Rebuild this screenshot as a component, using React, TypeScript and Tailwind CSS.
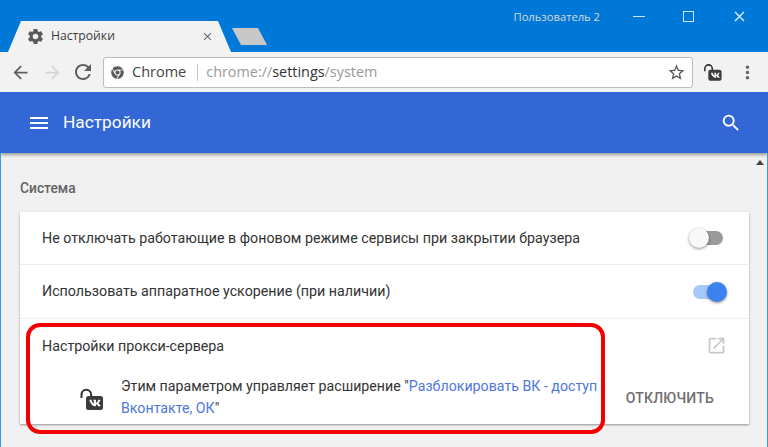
import { FaChrome, FaVk } from "react-icons/fa"
import { MdArrowBack, MdArrowForward, MdClose, MdMenu, MdMoreVert, MdOpenInNew, MdRefresh, MdSearch, MdSettings, MdStarBorder } from "react-icons/md"

function VkLock({ className }: { className: string }) {
    return (
        <div className={`relative h-[23px] w-[24px] shrink-0 ${className}`}>
            <svg viewBox="0 0 24 23" className="h-[23px] w-[24px]">
                <path d="M1.5 10V6.5a4.8 4.8 0 0 1 9.6 0V9" fill="none" stroke="#333" strokeWidth="2" />
                <rect x="6" y="8" width="17" height="14" rx="2.5" fill="#3c3c3c" />
            </svg>
            <FaVk className="absolute left-[8.5px] top-[9px] text-[12px] text-white" />
        </div>
    )
}

function Toggle({ on }: { on: boolean }) {
    return (
        <div className="relative h-[14px] w-[34px]">
            <div className={`h-[14px] rounded-full ${on ? "w-[31px] bg-[#a8c8fb]" : "ml-auto w-[30px] bg-[#9a9a9a]"}`} />
            <div className={`absolute top-[-3px] h-[20px] w-[20px] rounded-full shadow-[0_1px_3px_rgba(0,0,0,0.45)] ${on ? "right-0 bg-[#3b82f0]" : "left-0 bg-[#f8f8f8]"}`} />
        </div>
    )
}

export default function App() {
    return (
        <div className="flex h-[447px] w-[768px] flex-col overflow-hidden bg-[#f1f1f1] font-['Roboto',sans-serif]">
            {/* заголовок окна */}
            <div className="flex h-[52px] shrink-0 bg-[#0078d7]">
                <div className="ml-[8px] mt-[21px] flex h-[31px] w-[223px] items-center bg-[#f2f2f2] pl-[18px] pr-[17px] [clip-path:polygon(0_100%,13px_0,210px_0,100%_100%)]">
                    <MdSettings className="text-[19px] text-[#5a5a5a]" />
                    <span className="ml-[6px] font-['Open_Sans',sans-serif] text-[12.2px] text-[#3c3c3c]">Настройки</span>
                    <MdClose className="ml-auto text-[13px] text-[#666]" />
                </div>
                <div className="ml-[1px] mt-[28px] h-[17px] w-[35px] bg-[#c8c8c8] [clip-path:polygon(0_0,26px_0,100%_100%,9px_100%)]" />
                <span className="ml-auto mt-[9px] h-[16px] font-['Open_Sans',sans-serif] text-[11.2px] font-medium leading-[16px] text-[#d8d8d8]">Пользователь 2</span>
                <div className="ml-[33px] mr-[20px] mt-[9px] flex h-[15px] w-[115px] items-center justify-between">
                    <div className="h-px w-[12px] bg-[#cfe4f7]" />
                    <div className="h-[11px] w-[11px] border border-[#cfe4f7]" />
                    <MdClose className="text-[17px] text-[#dcecf9]" />
                </div>
            </div>

            {/* панель адреса */}
            <div className="flex h-[40px] shrink-0 items-center bg-[#f2f2f2] pl-[10px]">
                <MdArrowBack className="text-[21px] text-[#5f5f5f]" />
                <MdArrowForward className="ml-[11px] text-[21px] text-[#d4d4d4]" />
                <MdRefresh className="ml-[8px] text-[24px] text-[#5f5f5f]" />
                <div className="ml-[8px] flex h-[31px] w-[590px] items-center rounded-[3px] border border-[#bdbdbd] bg-white pl-[7px] pr-[6px]">
                    <FaChrome className="text-[13px] text-[#5a5a5a]" />
                    <span className="ml-[8px] font-['Open_Sans',sans-serif] text-[14.5px] text-[#444]">Chrome</span>
                    <div className="ml-[11px] h-[17px] w-px bg-[#c4c4c4]" />
                    <span className="ml-[8px] font-['Open_Sans',sans-serif] text-[14.4px] text-[#999]">chrome://<span className="text-[#333]">settings</span>/system</span>
                    <MdStarBorder className="ml-auto text-[19px] text-[#555]" />
                </div>
                <VkLock className="ml-[8px] scale-[0.78]" />
                <MdMoreVert className="ml-[12px] text-[21px] text-[#666]" />
            </div>

            {/* шапка настроек */}
            <div className="flex h-[61px] shrink-0 items-center bg-[#3367d6] pl-[27px] pr-[26px] shadow-[0_2px_3px_rgba(0,0,0,0.35)]">
                <MdMenu className="text-[24px] text-white" />
                <h1 className="ml-[12px] text-[17.3px] text-white">Настройки</h1>
                <MdSearch className="ml-auto text-[22px] text-white" />
            </div>

            {/* содержимое */}
            <div className="relative flex flex-1 flex-col border-x border-[#3a9ae6] pl-[19px] pr-[18px]">
                <div className="absolute right-[3px] top-[7px] h-0 w-0 border-x-[4px] border-b-[5px] border-x-transparent border-b-[#444]" />
                <h2 className="mt-[26px] h-[18px] text-[13.8px] font-medium leading-[18px] text-[#646464]">Система</h2>
                <div className="relative mt-[15px] h-[212px] bg-white shadow-[0_1px_2px_rgba(0,0,0,0.4)]">
                    <div className="flex h-[53px] items-center justify-between border-b border-[#eeeeee] pl-[22px] pr-[26px] text-[14.25px] text-[#333]">
                        <span className="mt-[1px]">Не отключать работающие в фоновом режиме сервисы при закрытии браузера</span>
                        <Toggle on={false} />
                    </div>
                    <div className="flex h-[54px] items-center justify-between border-b border-[#eeeeee] pl-[22px] pr-[22px] text-[14.25px] text-[#333]">
                        <span>Использовать аппаратное ускорение (при наличии)</span>
                        <Toggle on={true} />
                    </div>
                    <div className="flex items-center justify-between pl-[22px] pr-[22px] pt-[16px] text-[14.25px] text-[#333]">
                        <span className="h-[20px] leading-[20px]">Настройки прокси-сервера</span>
                        <MdOpenInNew className="text-[21px] text-[#c8c8c8]" />
                    </div>
                    <div className="mt-[19px] flex pl-[60px] pr-[35px]">
                        <VkLock className="mt-[13px]" />
                        <div className="ml-[17px] w-[482px] text-[14.2px] leading-[22px]">
                            <p className="text-[#333]">Этим параметром управляет расширение "<span className="text-[#4f77dc]">Разблокировать ВК - доступ</span></p>
                            <p className="text-[#4f77dc]">Вконтакте, ОК<span className="text-[#333]">"</span></p>
                        </div>
                        <span className="ml-auto mt-[13px] text-[14px] font-medium tracking-[0.2px] text-[#6e6e6e]">ОТКЛЮЧИТЬ</span>
                    </div>
                    {/* красная рамка поверх карточки */}
                    <div className="absolute left-[6px] top-[111px] h-[111px] w-[579px] rounded-[14px] border-[4px] border-[#f50000]" />
                </div>
            </div>
        </div>
    )
}
